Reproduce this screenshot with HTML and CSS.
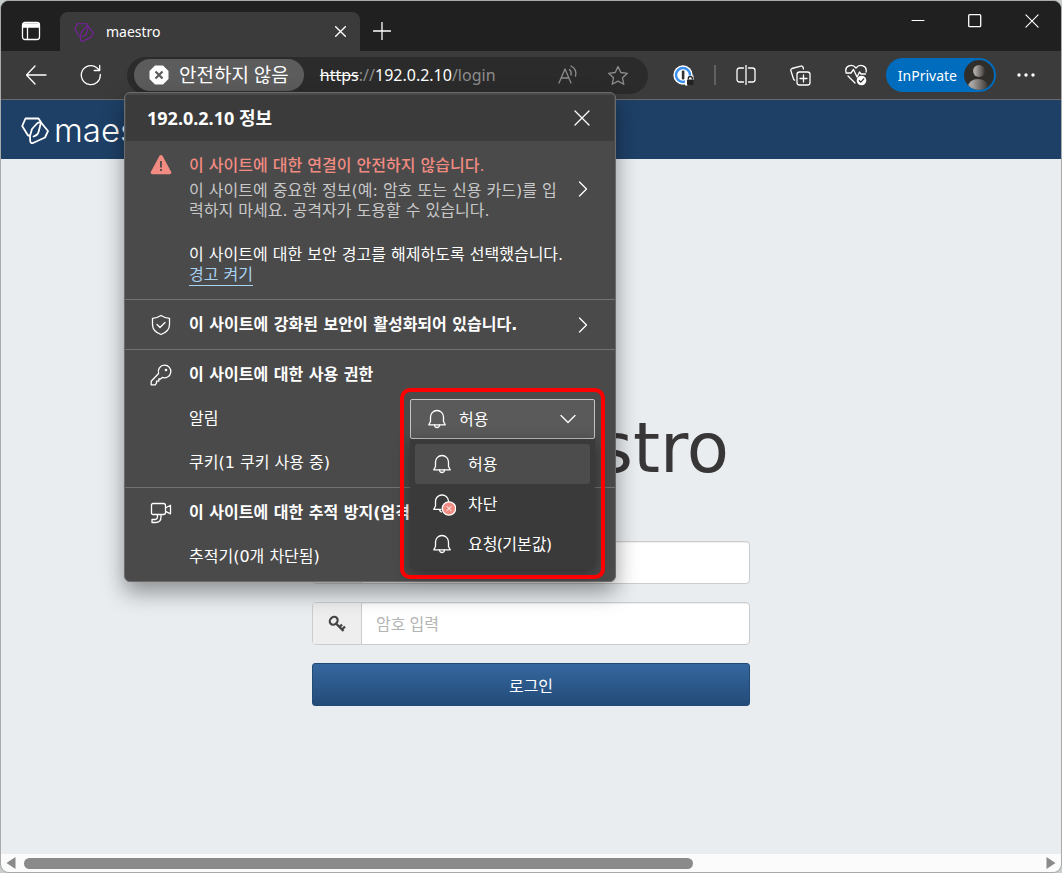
FILE: index.html
```html
<!DOCTYPE html>
<html lang="ko">
<head>
<meta charset="utf-8">
<meta name="viewport" content="width=device-width, initial-scale=1">
<title>maestro</title>
<link rel="stylesheet" href="styles.css">
</head>
<body>
<svg class="defs" aria-hidden="true">
  <symbol id="mark" viewBox="0 0 28 28">
    <path d="M9 19.500H7L1.200 10 4.500 2.500H17.500L20 6.200 17.700 15.500Q17 19 12.500 20.500"/>
    <path d="M20 6.500 27 15 24 21.500 12 27Q9.500 27.500 9.200 25L9 20 11 13 16 7.500Q18 5.800 20 6.500z"/>
  </symbol>
  <symbol id="bell" viewBox="0 0 20 22">
    <path d="M3.500 9a6.500 6.500 0 0 1 13 0v4.500l1.700 3.300H1.800l1.700-3.300z"/>
    <path d="M7.500 17c.2 3.300 4.800 3.300 5 0"/>
  </symbol>
  <symbol id="chevron" viewBox="0 0 10 16"><path d="M1.500 1 8.500 8 1.500 15"/></symbol>
  <symbol id="cross" viewBox="0 0 16 16"><path d="M1 1 15 15M15 1 1 15"/></symbol>
</svg>

<div class="window">
  <header class="tabstrip">
    <button class="tab-actions" aria-label="탭 작업 메뉴">
      <svg class="line" width="20" height="20" viewBox="0 0 20 20"><rect x="1.500" y="1.500" width="17" height="17" rx="2.500"/><path d="M2 3h16v3H2z" fill="currentColor"/><path d="M6.500 6v12"/></svg>
    </button>
    <div class="tab">
      <svg class="tab-icon line" width="20" height="20"><use href="#mark"/></svg>
      <span class="tab-title">maestro</span>
      <button class="icon-btn" aria-label="탭 닫기"><svg class="line bold-line" width="11" height="11"><use href="#cross"/></svg></button>
    </div>
    <button class="new-tab" aria-label="새 탭"><svg class="line" width="18" height="18" viewBox="0 0 18 18"><path d="M9 .5v17M.5 9h17"/></svg></button>
    <div class="window-controls">
      <button aria-label="최소화"><svg class="line" width="14" height="14" viewBox="0 0 14 14"><path d="M1 6.500h12" stroke-width="1"/></svg></button>
      <button aria-label="최대화"><svg class="line" width="14" height="14" viewBox="0 0 14 14"><rect x=".7" y=".7" width="12" height="12" rx="1"/></svg></button>
      <button aria-label="닫기"><svg class="line" width="14" height="14"><use href="#cross"/></svg></button>
    </div>
  </header>

  <div class="toolbar">
    <div class="nav">
      <button class="icon-btn" aria-label="뒤로"><svg class="line" width="22" height="20" viewBox="0 0 22 20"><path d="M21 10H1.500M10 1 1.500 10 10 19"/></svg></button>
      <button class="icon-btn" aria-label="새로 고침"><svg class="line" width="22" height="22" viewBox="0 0 22 22"><path d="M20.300 10.500a9.500 9.500 0 1 1-3.500-6.800l2.700 2.500M19.700 1.500v5h-5.500"/></svg></button>
    </div>
    <div class="address">
      <button class="security">
        <svg width="20" height="20" viewBox="0 0 20 20"><path d="M6 .5h8L19.500 6v8L14 19.500H6L.5 14V6z" fill="#fff"/><path d="M6.500 6.500l7 7M13.500 6.500l-7 7" stroke="#5c5c5c" stroke-width="2.200"/></svg>
        <span>안전하지 않음</span>
      </button>
      <div class="url"><s>https</s>://<b>192.0.2.10</b>/login</div>
      <div class="address-tools">
        <button class="icon-btn small" aria-label="소리내어 읽기"><svg class="line" width="22" height="20" viewBox="0 0 22 20"><path d="M2 18 8 4l6 14M4.200 13h7.600M12.500 4.500c1.500 1.300 2 3.500 1.500 5.500M14 1c4 2 5.500 6 4.500 10"/></svg></button>
        <button class="icon-btn small" aria-label="즐겨찾기에 추가"><svg class="line" width="22" height="21" viewBox="0 0 22 21"><path d="m11 1.500 2.800 6 6.600.8-4.900 4.500 1.300 6.500L11 16.100l-5.800 3.200 1.300-6.500L1.600 8.300l6.600-.8z"/></svg></button>
      </div>
    </div>
    <div class="tools">
      <button class="icon-btn" aria-label="암호 관리자"><svg width="21" height="21" viewBox="0 0 21 21"><circle cx="10" cy="10" r="9.700" fill="#fff"/><circle cx="10" cy="10" r="7" fill="#fff" stroke="#3b8ff0" stroke-width="2.500"/><rect x="8.800" y="5.500" width="2.600" height="9" rx="1" fill="#333"/><path d="M12 20.500v-7l2-3h6.500v4.500h-6v5.500z" fill="#fff"/><rect x="14" y="14.500" width="6.500" height="5.500" rx="1" fill="#222"/><path d="M15.300 14.500v-1a2 2 0 0 1 4 0v1" fill="none" stroke="#222" stroke-width="1.300"/></svg></button>
      <span class="divider"></span>
      <div class="tool-group">
        <button class="icon-btn" aria-label="화면 분할"><svg class="line" width="20" height="20" viewBox="0 0 20 20"><path d="M7.500 3h-4a2.500 2.500 0 0 0-2.500 2.500v9A2.500 2.500 0 0 0 3.500 17h4M12.500 3h4A2.500 2.500 0 0 1 19 5.500v9a2.500 2.500 0 0 1-2.500 2.500h-4M10 0v20"/></svg></button>
        <button class="icon-btn" aria-label="컬렉션"><svg class="line" width="21" height="21" viewBox="0 0 21 21"><rect x="7" y="7" width="13" height="13" rx="2.500"/><path d="M13.500 10v7M10 13.500h7M13.500 4 13 2.300a1.700 1.700 0 0 0-2.200-1.200L2 3.500A1.700 1.700 0 0 0 .9 5.700l2.600 8.300a2 2 0 0 0 1.200 1.200"/></svg></button>
        <button class="icon-btn" aria-label="브라우저 필수 요소"><svg class="line" width="22" height="22" viewBox="0 0 22 22"><path d="M1 8C-.5 2 7-1 11 4c4-5 11.500-2 10 4M1 9h5l2.500-3.500L12 13l2.500-5 1.500 2h4.500M3 12l7 7"/><circle cx="16.500" cy="16.500" r="4.800" fill="#fff" stroke="none"/><path d="m14.300 16.700 1.500 1.400 3-3.200" stroke="#333"/></svg></button>
      </div>
      <button class="profile">
        <span>InPrivate</span>
        <svg width="30" height="30" viewBox="0 0 30 30"><defs><linearGradient id="person"><stop offset=".2" stop-color="#aaa6a3"/><stop offset="1" stop-color="#3a3734"/></linearGradient><clipPath id="round"><circle cx="15" cy="15" r="15"/></clipPath></defs><g clip-path="url(#round)"><path fill="#302e2b" d="M0 0h30v30H0z"/><circle cx="15" cy="11" r="6" fill="url(#person)"/><ellipse cx="14" cy="27" rx="10" ry="8" fill="url(#person)"/></g></svg>
      </button>
      <button class="icon-btn" aria-label="설정 및 기타"><svg width="18" height="4" viewBox="0 0 18 4" fill="#fff"><circle cx="2" cy="2" r="1.700"/><circle cx="9" cy="2" r="1.700"/><circle cx="16" cy="2" r="1.700"/></svg></button>
    </div>
  </div>

  <div class="page">
    <div class="site-header">
      <svg class="line thick" width="28" height="28"><use href="#mark"/></svg>
      <span>maestro</span>
    </div>
    <main class="login">
      <h1 class="brand"><svg class="line thick" width="64" height="64"><use href="#mark"/></svg><span>maestro</span></h1>
      <form class="login-form">
        <div class="field">
          <label for="user" aria-label="사용자 이름"><svg width="18" height="18" viewBox="0 0 18 18" fill="#444"><circle cx="9" cy="5" r="4"/><path d="M1 17c0-9 16-9 16 0z"/></svg></label>
          <input id="user" type="text">
        </div>
        <div class="field">
          <label for="password" aria-label="암호"><svg width="18" height="18" viewBox="0 0 18 18" fill="none" stroke="#444"><ellipse cx="5.700" cy="5.700" rx="4.200" ry="3.600" transform="rotate(-45 5.700 5.700)" stroke-width="2.200"/><path d="m8 8.500 7.500 7.500M11.500 12l2.500-2.500M14 14.500l3-3" stroke-width="2.400"/></svg></label>
          <input id="password" type="password" placeholder="암호 입력">
        </div>
        <button class="submit" type="button">로그인</button>
      </form>
    </main>
    <div class="scrollbar">
      <svg width="10" height="12" viewBox="0 0 10 12"><path d="M9.500 0v12L.5 6z"/></svg>
      <div class="track"><div class="thumb"></div></div>
      <svg width="10" height="12" viewBox="0 0 10 12"><path d="M.5 0v12l9-6z"/></svg>
    </div>
  </div>

  <section class="popup" aria-label="사이트 정보">
    <header class="popup-head">
      <h2>192.0.2.10 정보</h2>
      <button class="icon-btn" aria-label="닫기"><svg class="line" width="16" height="16"><use href="#cross"/></svg></button>
    </header>
    <div class="block warning">
      <svg class="block-icon" width="22" height="22" viewBox="0 0 22 22"><path d="M9.500 1.800a1.700 1.700 0 0 1 3 0l8.600 16a1.700 1.700 0 0 1-1.500 2.500H2.400a1.700 1.700 0 0 1-1.500-2.500z" fill="#f28b82"/><path d="M11 7v6.500M11 15v2" stroke="#4a4a4a" stroke-width="1.800"/></svg>
      <div class="block-text">
        <h3>이 사이트에 대한 연결이 안전하지 않습니다.</h3>
        <p class="muted">이 사이트에 중요한 정보(예: 암호 또는 신용 카드)를 입력하지 마세요. 공격자가 도용할 수 있습니다.</p>
        <p class="notice">이 사이트에 대한 보안 경고를 해제하도록 선택했습니다.</p>
        <a href="#warnings">경고 켜기</a>
      </div>
      <button class="icon-btn more" aria-label="연결 세부 정보"><svg class="line" width="10" height="16"><use href="#chevron"/></svg></button>
    </div>
    <div class="block">
      <div class="row titled">
        <svg class="line block-icon" width="20" height="22" viewBox="0 0 20 22"><path d="M10 1.500c2.600 1.700 5 2.600 8.500 2.800v6.200c0 4.500-3.500 8.200-8.500 10-5-1.800-8.500-5.500-8.500-10V4.300C5 4.100 7.400 3.200 10 1.500zM6 10.500l3 3 5-5"/></svg>
        <h3>이 사이트에 강화된 보안이 활성화되어 있습니다.</h3>
        <button class="icon-btn more" aria-label="보안 세부 정보"><svg class="line" width="10" height="16"><use href="#chevron"/></svg></button>
      </div>
    </div>
    <div class="block">
      <div class="row titled">
        <svg class="line block-icon" width="22" height="22" viewBox="0 0 22 22"><path d="M14.500 1.200a6.300 6.300 0 1 1-2.200 12.200L10.500 15H8.800v2.200H6.500v2l-1.300 1.600H1.200v-3.600L8.600 9.500a6.300 6.300 0 0 1 5.900-8.300z"/><circle cx="16" cy="6" r="1.300" fill="#fff" stroke="none"/></svg>
        <h3>이 사이트에 대한 사용 권한</h3>
      </div>
      <div class="row">
        <label for="notify">알림</label>
        <div class="permission">
          <div class="select-box">
            <svg class="line" width="20" height="22"><use href="#bell"/></svg>
            <select id="notify"><option>허용</option><option>차단</option><option>요청(기본값)</option></select>
            <svg class="line arrow" width="16" height="10" viewBox="0 0 16 10"><path d="m1 1.500 7 7 7-7"/></svg>
          </div>
          <div class="menu">
            <button class="option current"><svg class="line" width="20" height="22"><use href="#bell"/></svg>허용</button>
            <button class="option"><svg class="line blocked" width="24" height="24" viewBox="0 0 24 24"><path d="M3.500 10a6.500 6.500 0 0 1 13-1v2M3.500 9.500V14l-1.700 3.300H9M7.500 17.500c.3 1.500 1 2.200 2 2.500"/><circle cx="17" cy="16.500" r="6.700" fill="#f28b82" stroke="#fff"/><path d="m15 14.500 4 4M19 14.500l-4 4" stroke-width="1"/></svg>차단</button>
            <button class="option"><svg class="line" width="20" height="22"><use href="#bell"/></svg>요청(기본값)</button>
          </div>
          <div class="highlight"></div>
        </div>
      </div>
      <div class="row">쿠키(1 쿠키 사용 중)</div>
    </div>
    <div class="block">
      <div class="row titled">
        <svg class="line block-icon" width="22" height="22" viewBox="0 0 22 22"><path d="M3 1.500h10.500q2 0 2 2v7q0 2-2 2H3q-1.500 0-1.500-1.500V3q0-1.500 1.500-1.500zM15.500 6l5-2.800v8.600l-5-2.500M11 12.500v2.500q0 5.500-5.500 5.500H2v-3h2.500q3 0 3-3v-2"/></svg>
        <h3>이 사이트에 대한 추적 방지(엄격)</h3>
      </div>
      <div class="row">추적기(0개 차단됨)</div>
    </div>
  </section>
</div>
</body>
</html>
```

FILE: styles.css
```css
* {
  box-sizing: border-box;
}

body {
  margin: 0;
  background: #c9cccd;
  font-family: "Noto Sans", "Noto Sans CJK KR", sans-serif;
  font-size: 16px;
  color: #fff;
}

button,
input,
select {
  font: inherit;
  color: inherit;
}

button {
  padding: 0;
  border: 0;
  background: none;
}

h1,
h2,
h3,
p {
  margin: 0;
}

.defs {
  position: absolute;
  width: 0;
  height: 0;
}

svg {
  flex: none;
  display: block;
}

.line {
  fill: none;
  stroke: currentColor;
  stroke-width: 1.3;
  stroke-linejoin: round;
  stroke-linecap: round;
}

.bold-line {
  stroke-width: 2;
}

.thick {
  stroke-width: 1.8;
}

.window {
  position: relative;
  display: flex;
  flex-direction: column;
  min-height: 100vh;
  border: 1px solid #a9abab;
  border-radius: 9px;
  overflow: hidden;
  background: #3b3b3b;
}

/* Tab strip */

.tabstrip {
  display: flex;
  align-items: flex-end;
  height: 50px;
  background: #202020;
}

.tab-actions {
  display: grid;
  place-items: center;
  width: 59px;
  height: 40px;
}

.tab {
  display: flex;
  align-items: center;
  width: 300px;
  height: 39px;
  padding: 0 4px 0 14px;
  border-radius: 8px 8px 0 0;
  background: #3b3b3b;
  font-size: 14px;
}

.tab-icon {
  color: #7b1fa2;
  stroke-width: 1.5;
}

.tab-title {
  flex: 1;
  margin-left: 12px;
}

.new-tab {
  display: grid;
  place-items: center;
  width: 43px;
  height: 40px;
}

.window-controls {
  display: flex;
  align-self: flex-start;
  gap: 11px;
  margin-left: auto;
  padding-right: 6px;
}

.window-controls button {
  display: grid;
  place-items: center;
  width: 46px;
  height: 39px;
}

/* Toolbar */

.icon-btn {
  flex: none;
  display: grid;
  place-items: center;
  width: 32px;
  height: 32px;
}

.icon-btn.small {
  width: 24px;
}

.toolbar {
  display: flex;
  align-items: center;
  gap: 20px;
  height: 49px;
  padding: 0 19px;
  border-bottom: 1px solid #6a6a6a;
}

.nav {
  display: flex;
  gap: 23px;
}

.address {
  flex: 1;
  display: flex;
  align-items: center;
  height: 37px;
  padding: 0 18px 0 7px;
  border-radius: 19px;
  background: #2b2b2b;
}

.security {
  display: flex;
  align-items: center;
  gap: 10px;
  height: 32px;
  padding: 0 15px;
  border-radius: 16px;
  background: #5c5c5c;
  font-size: 19px;
  line-height: 32px;
  white-space: nowrap;
}

.url {
  margin-left: 16px;
  color: #8d8d8d;
}

.url s,
.url b {
  color: #fff;
  font-weight: 400;
}

.address-tools {
  display: flex;
  gap: 26px;
  margin-left: auto;
  color: #8d8d8d;
}

.tools {
  display: flex;
  align-items: center;
  gap: 14px;
}

.divider {
  width: 2px;
  height: 20px;
  background: #616161;
}

.tool-group {
  display: flex;
  gap: 23px;
}

.profile {
  display: flex;
  align-items: center;
  gap: 7px;
  height: 34px;
  padding: 0 2px 0 12px;
  border-radius: 17px;
  background: #006cbe;
  font-size: 14px;
}

/* Page */

.page {
  flex: 1;
  display: flex;
  flex-direction: column;
  background: #e9edf0;
}

.site-header {
  display: flex;
  align-items: center;
  gap: 5px;
  height: 59px;
  padding-left: 20px;
  background: #1e4066;
  font: 300 33px/56px Inter, sans-serif;
}

.login {
  flex: 1;
  display: flex;
  flex-direction: column;
  align-items: center;
  gap: 53px;
  padding: 249px 20px 20px;
}

.brand {
  display: flex;
  align-items: center;
  gap: 48px;
  color: #383636;
  font: 400 69px/80px "DejaVu Sans", sans-serif;
}

.login-form {
  display: flex;
  flex-direction: column;
  gap: 18px;
  width: 100%;
  max-width: 438px;
}

.field {
  display: flex;
  height: 43px;
  border: 1px solid #ccc;
  border-radius: 4px;
  overflow: hidden;
  background: #fff;
}

.field label {
  display: grid;
  place-items: center;
  width: 49px;
  border-right: 1px solid #ccc;
  background: #eee;
}

.field input {
  flex: 1;
  min-width: 0;
  padding: 0 14px;
  border: 0;
  box-shadow: inset 0 1px 1px #0001;
  background: none;
  color: #555;
}

.field input::placeholder {
  color: #b3b3b3;
}

.submit {
  height: 43px;
  border: 1px solid #214a75;
  border-radius: 3px;
  background: linear-gradient(#35679f, #234b78);
}

.scrollbar {
  display: flex;
  align-items: center;
  gap: 8px;
  height: 18px;
  padding: 0 5px;
  background: #fbfbfb;
  fill: #8a8a8a;
}

.scrollbar .track {
  flex: 1;
}

.scrollbar .thumb {
  width: 66%;
  height: 11px;
  border-radius: 6px;
  background: #8a8a8a;
}

/* Site information popup */

.popup {
  position: absolute;
  top: 91px;
  left: 123px;
  width: 492px;
  border: 1px solid #6b6b6b;
  border-radius: 6px;
  background: #4a4a4a;
  box-shadow: 0 10px 22px #0006;
  font-family: "DejaVu Sans", "Noto Sans CJK KR", sans-serif;
  line-height: 20px;
}

.popup-head {
  display: flex;
  align-items: center;
  justify-content: space-between;
  height: 46px;
  margin: 2px 1px 0;
  padding: 0 16px 0 21px;
  background: #3b3b3b;
}

.popup-head h2 {
  font: 700 18px/24px "Noto Sans", "Noto Sans CJK KR", sans-serif;
}

.block {
  padding: 3px 0 2px;
}

.block + .block {
  border-top: 1px solid #727272;
}

.block h3 {
  font-size: 16px;
  font-weight: 700;
  line-height: 24px;
}

.block-icon {
  width: 22px;
}

.warning {
  display: flex;
  gap: 17px;
  padding: 13px 16px 13px 25px;
}

.block-text {
  flex: 1;
}

.warning h3 {
  margin-bottom: 3px;
  color: #f28b82;
  font-weight: 500;
}

.muted {
  width: 372px;
  color: #c8c8c8;
  word-break: break-all;
}

.notice {
  margin-top: 24px;
  white-space: nowrap;
}

.warning a {
  display: inline-block;
  border-bottom: 1px solid #a9d3f2;
  color: #a9d3f2;
  text-decoration: none;
}

.warning .more {
  margin-top: 19px;
  margin-left: -34px;
}

.row {
  display: flex;
  align-items: center;
  height: 44px;
  padding: 0 20px 0 64px;
}

.row.titled {
  gap: 17px;
  padding: 0 16px 0 25px;
}

.row .more {
  margin-left: auto;
}

.permission {
  position: relative;
  z-index: 1;
  width: 185px;
  margin-left: auto;
  font-family: "Noto Sans", "Noto Sans CJK KR", sans-serif;
}

.select-box {
  display: flex;
  align-items: center;
  height: 40px;
  padding: 0 18px 0 16px;
  border: 1px solid #c4c4c4;
  border-radius: 2px;
  background: #5a5a5a;
}

.select-box select {
  flex: 1;
  min-width: 0;
  margin-left: 12px;
  padding: 0;
  border: 0;
  outline: 0;
  background: none;
  appearance: none;
}

.menu {
  position: absolute;
  top: 100%;
  left: 0;
  right: 0;
  padding: 5px;
  border-radius: 0 0 4px 4px;
  background: #3a3a3a;
  box-shadow: 0 4px 16px #0006;
}

.option {
  display: flex;
  align-items: center;
  gap: 16px;
  width: 100%;
  height: 40px;
  padding: 0 17px;
  border-radius: 3px;
}

.option.current {
  background: #4c4c4c;
}

.blocked {
  margin-right: -4px;
}

/* Callout frame drawn around the open permission list */
.highlight {
  position: absolute;
  inset: -11px -10px -140px;
  border: 4px solid #f00;
  border-radius: 10px;
  pointer-events: none;
}
```
